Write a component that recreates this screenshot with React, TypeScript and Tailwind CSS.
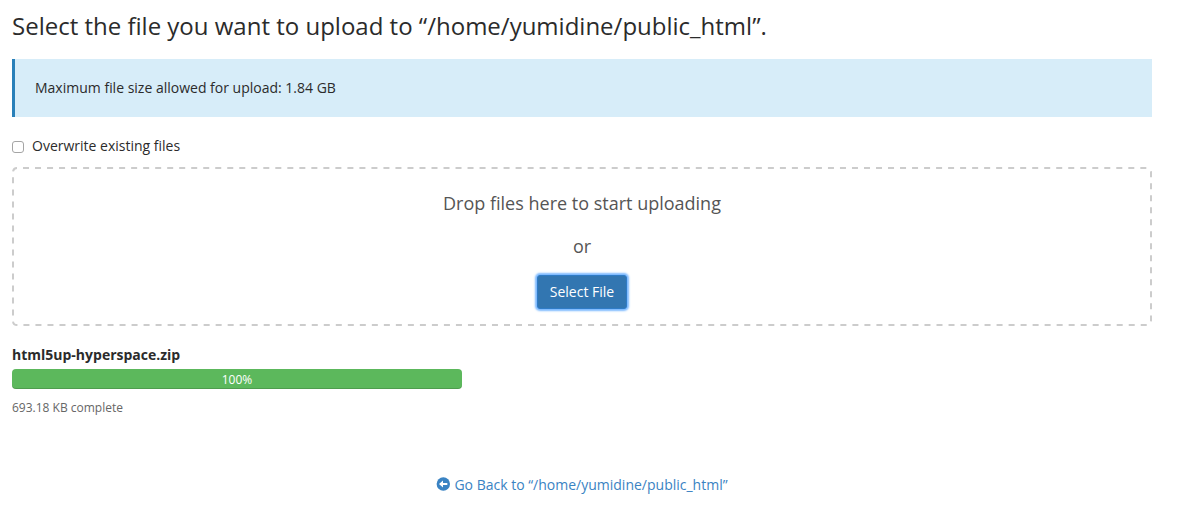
export default function App() {
  return (
    <main className="flex flex-col pt-2 pr-7 pl-3 font-['Open_Sans','Noto_Sans',sans-serif] text-sm text-[#2b2b2b]">
      <h1 className="text-2xl leading-9">
        Select the file you want to upload to “/home/yumidine/public_html”.
      </h1>
      <div className="mt-[15px] border-l-3 border-[#2980b9] bg-[#d7edf9] px-5 py-[19px] leading-5">
        Maximum file size allowed for upload: 1.84 GB
      </div>
      <label className="mt-[19px] flex items-center gap-2 self-start leading-5">
        <input
          type="checkbox"
          className="mt-[2px] size-3 appearance-none rounded-[3px] border border-[#a5a5a5] bg-white checked:bg-[#3276b1]"
        />
        Overwrite existing files
      </label>
      <section className="relative mt-[11px] flex flex-col items-center pt-6 pb-[17px] text-lg leading-6 text-[#555555]">
        <div className="pointer-events-none absolute inset-px">
          <svg className="block size-full overflow-visible" aria-hidden="true">
            <rect
              width="100%"
              height="100%"
              rx="4"
              fill="none"
              stroke="#cccccc"
              strokeWidth="2"
              strokeDasharray="6 6.014"
              strokeDashoffset="6"
            />
          </svg>
        </div>
        <p>Drop files here to start uploading</p>
        <p className="mt-[19px]">or</p>
        <button
          type="button"
          className="mt-[17px] h-[34px] rounded-[3px] border border-[#2f7cc7] bg-[#3276b1] px-3 text-sm text-white shadow-[0_0_2px_2px_#7dbaff]"
        >
          Select File
        </button>
      </section>
      <section className="mt-[19px] w-[450px] max-w-full">
        <h2 className="leading-5 font-bold">html5up-hyperspace.zip</h2>
        <div
          role="progressbar"
          aria-label="html5up-hyperspace.zip"
          aria-valuenow={100}
          aria-valuemin={0}
          aria-valuemax={100}
          className="mt-1 h-5 rounded-[4px] bg-[#5cb85c] pt-px text-center text-xs leading-5 text-white shadow-[inset_0_-1px_0_rgba(0,0,0,0.15)]"
        >
          100%
        </div>
        <p className="mt-[9px] text-xs leading-5 text-[#666666]">693.18 KB complete</p>
      </section>
      <a href="#" className="mt-[57px] flex items-center gap-1 self-center leading-5 text-[#3a83c3]">
        <svg viewBox="0 0 14 14" className="mb-[2px] size-3.5" aria-hidden="true">
          <circle cx="7.3" cy="7" r="6.7" fill="currentColor" />
          <path d="M3 7L7 3.4V5.9H11.3V8.1H7V10.6Z" fill="white" />
        </svg>
        Go Back to “/home/yumidine/public_html”
      </a>
    </main>
  );
}
